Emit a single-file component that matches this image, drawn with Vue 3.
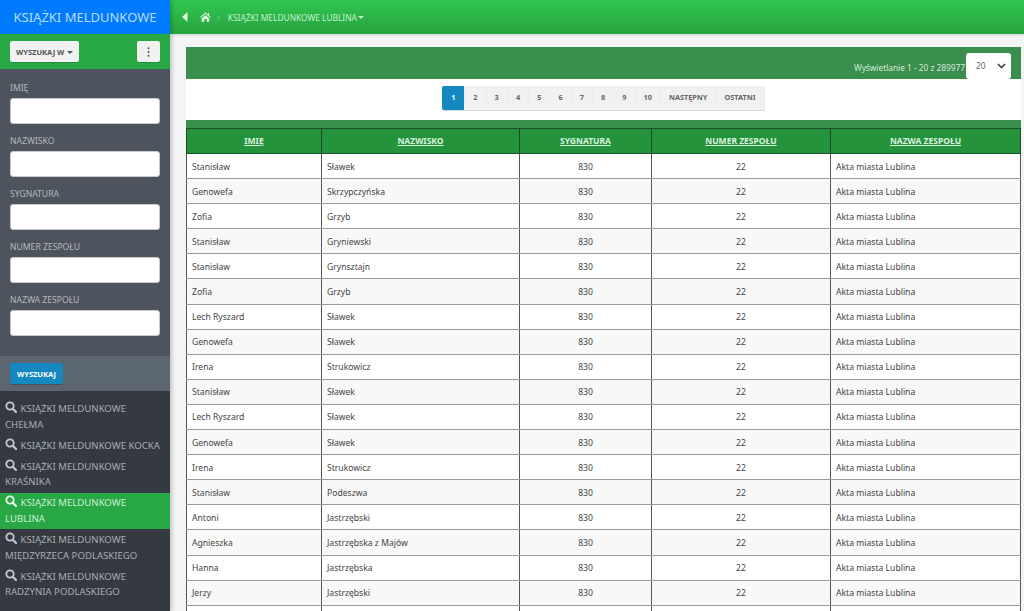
<template>
  <div class="page">
    <aside class="sidebar">
      <div class="brand">KSIĄŻKI MELDUNKOWE</div>
      <div class="side-tools">
        <button class="tool-btn">WYSZUKAJ W <span class="caret"></span></button>
        <button class="tool-btn dots">
          <svg width="3" height="10" viewBox="0 0 3 10"><circle cx="1.5" cy="1.2" r="1" /><circle cx="1.5" cy="5" r="1" /><circle cx="1.5" cy="8.8" r="1" /></svg>
        </button>
      </div>
      <form class="filters" @submit.prevent>
        <div v-for="field in columns" :key="field" class="filter">
          <label>{{ field }}</label>
          <input type="text" />
        </div>
      </form>
      <div class="filter-foot">
        <button class="search-btn">WYSZUKAJ</button>
      </div>
      <ul class="menu">
        <li v-for="item in menu" :key="item.label" :class="{ active: item.active }">
          <svg class="lens" width="12" height="12" viewBox="0 0 12 12">
            <circle cx="5" cy="5" r="3.7" fill="none" stroke="currentColor" stroke-width="1.8" />
            <path d="M7.8 7.8 11 11" stroke="currentColor" stroke-width="2.2" stroke-linecap="round" />
          </svg>
          {{ item.label }}
        </li>
      </ul>
    </aside>

    <div class="main">
      <header class="topbar">
        <svg class="back" width="6" height="10" viewBox="0 0 6 10"><path d="M5.5 0v10L0 5z" /></svg>
        <svg class="home" width="11" height="10" viewBox="0 0 14 12"><path d="M7 0 0 6.2l.8.9L7 1.8l6.2 5.3.8-.9-2.4-2.1V1H10v1.9zM2.2 7.6V12h3.2V8.4h3.2V12h3.2V7.6L7 3.4z" /></svg>
        <span class="sep">&gt;</span>
        <span class="crumb">KSIĄŻKI MELDUNKOWE LUBLINA</span><span class="caret"></span>
      </header>

      <section class="content">
        <div class="card">
          <div class="card-head">
            <span>Wyświetlanie 1 - 20 z 289977</span>
            <div class="per-page">
              20
              <svg width="9" height="6" viewBox="0 0 9 6"><path d="M1 1l3.5 3.5L8 1" fill="none" stroke="#444" stroke-width="1.7" /></svg>
            </div>
          </div>
          <div class="pager-row">
            <div class="pager">
              <a v-for="page in pages" :key="page" :class="{ current: page === '1' }">{{ page }}</a>
            </div>
          </div>
          <div class="strip"></div>
          <table>
            <colgroup>
              <col class="c1" /><col class="c2" /><col class="c3" /><col class="c4" /><col />
            </colgroup>
            <thead>
              <tr><th v-for="field in columns" :key="field"><u>{{ field }}</u></th></tr>
            </thead>
            <tbody>
              <tr v-for="(row, i) in rows" :key="i">
                <td>{{ row[0] }}</td>
                <td>{{ row[1] }}</td>
                <td class="mid">830</td>
                <td class="mid">22</td>
                <td>Akta miasta Lublina</td>
              </tr>
              <tr>
                <td v-for="n in 5" :key="n"></td>
              </tr>
            </tbody>
          </table>
        </div>
      </section>
    </div>
  </div>
</template>

<script setup>
const columns = ["IMIĘ", "NAZWISKO", "SYGNATURA", "NUMER ZESPOŁU", "NAZWA ZESPOŁU"];

const menu = [
  { label: "KSIĄŻKI MELDUNKOWE CHEŁMA" },
  { label: "KSIĄŻKI MELDUNKOWE KOCKA" },
  { label: "KSIĄŻKI MELDUNKOWE KRAŚNIKA" },
  { label: "KSIĄŻKI MELDUNKOWE LUBLINA", active: true },
  { label: "KSIĄŻKI MELDUNKOWE MIĘDZYRZECA PODLASKIEGO" },
  { label: "KSIĄŻKI MELDUNKOWE RADZYNIA PODLASKIEGO" },
];

const pages = ["1", "2", "3", "4", "5", "6", "7", "8", "9", "10", "NASTĘPNY", "OSTATNI"];

const rows = [
  ["Stanisław", "Sławek"],
  ["Genowefa", "Skrzypczyńska"],
  ["Zofia", "Grzyb"],
  ["Stanisław", "Gryniewski"],
  ["Stanisław", "Grynsztajn"],
  ["Zofia", "Grzyb"],
  ["Lech Ryszard", "Sławek"],
  ["Genowefa", "Sławek"],
  ["Irena", "Strukowicz"],
  ["Stanisław", "Sławek"],
  ["Lech Ryszard", "Sławek"],
  ["Genowefa", "Sławek"],
  ["Irena", "Strukowicz"],
  ["Stanisław", "Podeszwa"],
  ["Antoni", "Jastrzębski"],
  ["Agnieszka", "Jastrzębska z Majów"],
  ["Hanna", "Jastrzębska"],
  ["Jerzy", "Jastrzębski"],
];
</script>

<style>
html,
body {
  margin: 0;
  height: 100%;
  overflow: hidden;
}
</style>

<style scoped>
.page {
  display: flex;
  height: 611px;
  overflow: hidden;
  font-family: "Noto Sans", "Open Sans", sans-serif;
  font-size: 9px;
  color: #333;
}

.sidebar {
  width: 170px;
  flex: none;
  background: #353a42;
  box-shadow: 2px 0 4px rgba(0, 0, 0, 0.2);
  z-index: 1;
}

.brand {
  height: 34px;
  line-height: 34px;
  background: #007bff;
  color: #b9dcff;
  text-align: center;
  font-size: 13px;
  white-space: nowrap;
}

.side-tools {
  height: 35px;
  box-sizing: border-box;
  padding: 7px 10px 0;
  display: flex;
  justify-content: space-between;
  background: #28a745;
}

.tool-btn {
  height: 21px;
  padding: 0 6px;
  border: none;
  border-radius: 2px;
  background: #f1f1f1;
  color: #555;
  font: 700 7.5px "Noto Sans", sans-serif;
  box-shadow: 0 1px 0 rgba(0, 0, 0, 0.15);
}

.dots {
  width: 23px;
  padding: 0;
  display: flex;
  align-items: center;
  justify-content: center;
}

.dots svg {
  fill: #555;
}

.caret {
  display: inline-block;
  margin-left: 1px;
  vertical-align: middle;
  border-top: 3px solid currentColor;
  border-left: 3px solid transparent;
  border-right: 3px solid transparent;
}

.filters {
  height: 287px;
  box-sizing: border-box;
  padding-top: 10px;
  background: #4d545d;
}

.filter {
  padding: 0 10px;
  height: 53px;
}

.filter label {
  display: block;
  height: 19px;
  line-height: 19px;
  color: #b4b8bc;
  font-size: 8.6px;
}

.filter input {
  display: block;
  width: 100%;
  height: 26px;
  box-sizing: border-box;
  border: 1px solid #c9c9c9;
  border-radius: 3px;
  background: #fff;
}

.filter-foot {
  height: 35px;
  box-sizing: border-box;
  padding: 7px 10px 0;
  background: #5c6670;
}

.search-btn {
  height: 21px;
  width: 53px;
  padding: 0;
  border: none;
  border-radius: 2px;
  background: #1589bf;
  color: #fff;
  font: 700 7.5px "Noto Sans", sans-serif;
  box-shadow: 0 1px 0 rgba(0, 0, 0, 0.2);
}

.menu {
  list-style: none;
  margin: 0;
  padding: 7.4px 0 0;
}

.menu li {
  padding: 2.8px 5px;
  line-height: 15.5px;
  font-size: 9.6px;
  color: #a9abae;
}

.menu li.active {
  background: #28a745;
  color: #c9f0d3;
}

.lens {
  vertical-align: -1px;
  margin-right: 1px;
  color: #c5c7c9;
}

.active .lens {
  color: #e6f7ea;
}

.main {
  flex: 1;
  min-width: 0;
  display: flex;
  flex-direction: column;
  background: #f4f4f4;
}

.topbar {
  height: 34px;
  flex: none;
  display: flex;
  align-items: center;
  padding-left: 12px;
  background: linear-gradient(#30c750, #28a23f);
  color: #c4efcf;
  font-size: 8.4px;
  box-shadow: 0 1px 3px rgba(0, 0, 0, 0.15);
}

.back {
  fill: #dff5e4;
  margin-right: 12px;
}

.home {
  fill: #dff5e4;
}

.sep {
  margin: 0 7px 0 5px;
  color: #5fd07a;
}

.content {
  flex: 1;
  min-height: 0;
  padding: 13px 3px 0 16px;
}

.card {
  background: #fff;
}

.card-head {
  height: 32px;
  display: flex;
  align-items: flex-start;
  justify-content: flex-end;
  background: #3a8e4e;
  color: #d5ebd9;
  font-size: 8.3px;
  line-height: 41px;
}

.per-page {
  display: flex;
  align-items: center;
  justify-content: space-between;
  width: 45px;
  height: 26px;
  margin: 6px 10px 0 1px;
  padding: 0 5px 0 10px;
  box-sizing: border-box;
  border-radius: 3px;
  background: #fff;
  color: #666;
  line-height: 26px;
}

.pager-row {
  height: 41px;
  box-sizing: border-box;
  padding-top: 7px;
  display: flex;
  justify-content: center;
  background: #fff;
}

.pager {
  display: flex;
  height: 24px;
  border-radius: 2px;
  background: #f1f1f1;
  box-shadow: 0 1px 0 rgba(0, 0, 0, 0.15);
}

.pager a {
  padding: 0 8.05px;
  line-height: 23px;
  font-size: 7.3px;
  font-weight: 700;
  color: #666;
  border-right: 1px solid #ececec;
}

.pager a.current {
  padding: 0 8.8px;
  border-radius: 2px 0 0 2px;
  background: #1589bf;
  color: #fff;
}

.strip {
  height: 8px;
  background: #3a8e4e;
}

table {
  width: 835px;
  table-layout: fixed;
  border-collapse: collapse;
}

.c1 {
  width: 135px;
}

.c2 {
  width: 198px;
}

.c3 {
  width: 132px;
}

.c4 {
  width: 179px;
}

th {
  height: 25px;
  padding: 0 5px 1px;
  box-sizing: border-box;
  background: #24933c;
  border: 1px solid #1d4a28;
  color: #d9f1df;
  font-size: 8.5px;
  font-weight: 700;
}

td {
  height: 25.1px;
  padding: 1px 5px 0;
  box-sizing: border-box;
  border: 1px solid #555;
  border-bottom-color: #9a9a9a;
  color: #444;
  font-size: 8.6px;
}

tbody tr:nth-child(even) td {
  background: #f8f8f8;
}

.mid {
  text-align: center;
}
</style>
